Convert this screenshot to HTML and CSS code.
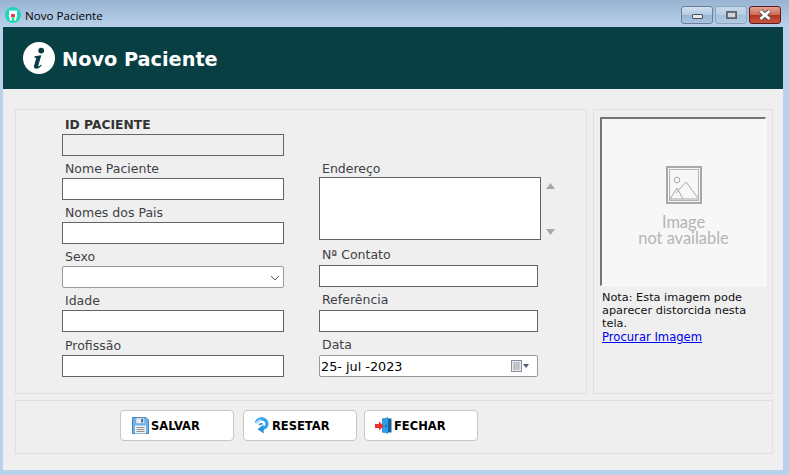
FILE: index.html
```html
<!DOCTYPE html>
<html lang="pt">
<head>
<meta charset="utf-8">
<title>Novo Paciente</title>
<link rel="stylesheet" href="styles.css">
</head>
<body>
<div class="titlebar">
  <svg class="app-icon" width="16" height="16" viewBox="0 0 16 16">
    <circle cx="8" cy="8" r="8" fill="#1fd6bd"/>
    <path d="M4 3.500h8v5l-1 5h-1.600L8.600 9.500H7.400l-.8 4H5l-1-5z" fill="#fff"/>
    <path d="M6 7h4v3H6z" fill="#e0405a"/>
    <path d="M5.500 11.500h1.200l.3-1.500H6zM10.500 11.500H9.300L9 10h1z" fill="#e8c22a"/>
  </svg>
  <span class="title-text">Novo Paciente</span>
  <div class="win-buttons">
    <div class="win-btn"><span class="glyph-min"></span></div>
    <div class="win-btn win-btn-off"><span class="glyph-max"></span></div>
    <div class="win-btn win-btn-close">
      <svg width="14" height="12" viewBox="0 0 14 12"><path d="M2.500 2l9 8M11.500 2l-9 8" stroke="#46505c" stroke-width="4.400"/><path d="M2.500 2l9 8M11.500 2l-9 8" stroke="#fff" stroke-width="2.800"/></svg>
    </div>
  </div>
</div>
<div class="content">
  <header class="banner">
    <svg width="32" height="32" viewBox="0 0 32 32">
      <circle cx="16" cy="16" r="16" fill="#fff"/>
      <circle cx="18.200" cy="8.600" r="2.900" fill="#073f43"/>
      <path d="M11.500 14.200l6.800-1-3 10.200c-.2.900.5 1 1.100.6l1.800-1.400.5.700c-1.600 2-3.400 3.400-5.500 3.400-2 0-2.600-1.300-2.100-3.100l2-6.900c.2-.8-.2-1-1.500-1z" fill="#073f43"/>
    </svg>
    <h1 class="banner-title">Novo Paciente</h1>
  </header>
  <main class="page">
    <div class="top-row">
      <section class="panel form-panel">
        <div class="col col-left">
          <label class="lbl lbl-strong">ID PACIENTE</label>
          <div class="input input-off"></div>
          <label class="lbl">Nome Paciente</label>
          <div class="input"></div>
          <label class="lbl">Nomes dos Pais</label>
          <div class="input"></div>
          <label class="lbl">Sexo</label>
          <div class="input input-select">
            <svg width="10" height="6" viewBox="0 0 10 6"><path d="M1 1l4 4 4-4" fill="none" stroke="#555" stroke-width="1"/></svg>
          </div>
          <label class="lbl">Idade</label>
          <div class="input"></div>
          <label class="lbl lbl-tall">Profissão</label>
          <div class="input"></div>
        </div>
        <div class="col col-right">
          <label class="lbl lbl-short">Endereço</label>
          <div class="area-row">
            <div class="input area"></div>
            <div class="scroller">
              <svg width="9" height="6" viewBox="0 0 9 6"><path d="M4.500 0L9 6H0z" fill="#a9a9a9"/></svg>
              <svg width="9" height="6" viewBox="0 0 9 6"><path d="M4.500 6L9 0H0z" fill="#a9a9a9"/></svg>
            </div>
          </div>
          <label class="lbl lbl-xtall">Nª Contato</label>
          <div class="input input-narrow"></div>
          <label class="lbl lbl-mid">Referência</label>
          <div class="input input-narrow"></div>
          <label class="lbl lbl-mid">Data</label>
          <div class="input input-narrow input-date">
            <span class="date-text">25- jul -2023</span>
            <svg width="18" height="12" viewBox="0 0 18 12">
              <rect x="0.500" y="0.500" width="10" height="11" fill="#e6e9ed" stroke="#8b8f95"/>
              <path d="M2 3h7M2 5h7M2 7h7M2 9h7M3.500 2v8M5.500 2v8M7.500 2v8" stroke="#b4b8bd" stroke-width="1"/>
              <path d="M12 4h6l-3 4z" fill="#46607c"/>
            </svg>
          </div>
        </div>
      </section>
      <aside class="panel photo-panel">
        <div class="photo">
          <svg width="36" height="38" viewBox="0 0 36 38">
            <rect x="1" y="1" width="34" height="36" fill="none" stroke="#a8a8a8" stroke-width="2"/>
            <rect x="3.500" y="3.500" width="29" height="31" fill="none" stroke="#b4b4b4"/>
            <circle cx="11" cy="14" r="2.800" fill="none" stroke="#a8a8a8"/>
            <path d="M4 33l7-11 6 11M10 27l10-11 12 16M4 33h28" fill="none" stroke="#a8a8a8" stroke-width="1"/>
          </svg>
          <p class="photo-text">Image<br>not available</p>
        </div>
        <p class="note">Nota: Esta imagem pode aparecer distorcida nesta tela.</p>
        <a class="browse" href="#">Procurar Imagem</a>
      </aside>
    </div>
    <section class="panel actions">
      <button class="btn">
        <svg width="17" height="17" viewBox="0 0 17 17">
          <path d="M.5.500h13.500l2.500 2.500v13.500H.5z" fill="#6db3ea" stroke="#3f82bd"/>
          <rect x="4" y="1" width="8.500" height="5.500" fill="#e8eef4" stroke="#7f9db8" stroke-width=".5"/>
          <rect x="9" y="2" width="2.200" height="3.500" fill="#3f76a3"/>
          <rect x="3" y="8.500" width="11" height="8" fill="#f2f2f2"/>
          <path d="M4.500 10.500h8M4.500 12.500h8M4.500 14.500h8" stroke="#8f8f8f"/>
        </svg>
        <span>SALVAR</span>
      </button>
      <button class="btn btn-reset">
        <svg width="15" height="17" viewBox="0 0 15 17">
          <path d="M2.200 6C3 2.800 6 1.500 8.500 1.900c3.300.5 4.900 3.300 4.400 5.900-.4 2-1.900 3.300-4 3.700" fill="none" stroke="#35a3ea" stroke-width="3.200"/>
          <path d="M2.400 6.200C3.400 3.800 5.500 3 7 3.100" fill="none" stroke="#a5dcfa" stroke-width="1.800"/>
          <path d="M9.500 7.600L9.800 16.500 3.500 12.300z" fill="#2a8fdc"/>
          <path d="M5 7.800c1-.8 2.300-1.100 3.500-.7" fill="none" stroke="#2a8fdc" stroke-width="1.600"/>
        </svg>
        <span>RESETAR</span>
      </button>
      <button class="btn btn-close">
        <svg width="17" height="17" viewBox="0 0 17 17">
          <path d="M7 1.500h9.500v14H7z" fill="#12609c"/>
          <path d="M7 2.500l6-2.500v17l-6-2.500z" fill="#2f9be4"/>
          <rect x="10.500" y="8" width="1" height="2" fill="#0d4a7a"/>
          <path d="M0 7h4V4.500L9 9l-5 4.500V11H0z" fill="#ee2f2f"/>
        </svg>
        <span>FECHAR</span>
      </button>
    </section>
  </main>
</div>
</body>
</html>
```
FILE: styles.css
```css
* { box-sizing: border-box; }
html, body { margin: 0; padding: 0; }
body {
  width: 789px;
  height: 475px;
  overflow: hidden;
  background: #b9d1ea;
  font-family: "DejaVu Sans", Verdana, sans-serif;
}
.titlebar {
  height: 27px;
  display: flex;
  align-items: center;
  padding: 3px 8px 0 5px;
  background: linear-gradient(to bottom, #98b4d2, #b9d1ea);
}
.app-icon { margin-right: 4px; }
.title-text {
  font-family: "Open Sans", "Noto Sans", sans-serif;
  font-size: 11.600px;
  color: #000;
}
.win-buttons {
  margin-left: auto;
  display: flex;
  gap: 2px;
  align-self: flex-start;
  margin-top: 3px;
}
.win-btn {
  width: 32px;
  height: 18px;
  border: 1px solid #6b7f9b;
  border-radius: 3px;
  background: linear-gradient(to bottom, #d0e0ef 0%, #b3cbe3 48%, #95b4d5 52%, #a9c4e0 100%);
  display: flex;
  align-items: center;
  justify-content: center;
}
.win-btn-off {
  border-color: #8ba4c2;
  background: linear-gradient(to bottom, #c6d8ea 0%, #b7cee5 48%, #a6c1dd 52%, #b3cbe4 100%);
}
.win-btn-close {
  border-color: #5c1a22;
  background: linear-gradient(to bottom, #e3a394 0%, #cf6a55 48%, #b8321e 52%, #c9583f 100%);
}
.glyph-min {
  display: block;
  width: 11px;
  height: 5px;
  margin-top: 3px;
  border: 1px solid #49525f;
  background: #e8e8e8;
  border-radius: 1px;
}
.glyph-max {
  display: block;
  width: 11px;
  height: 8px;
  border: 1px solid #5a6470;
  background: #d4d6d8;
  box-shadow: inset 0 0 0 1px #6c7682, inset 0 0 0 2px #d4d6d8;
}
.content {
  margin: 0 6px 5px 3px;
  height: 443px;
  background: #efefef;
}
.banner {
  height: 62px;
  background: #073f43;
  display: flex;
  align-items: center;
  gap: 7px;
  padding-left: 20px;
}
.banner-title {
  margin: 2px 0 0;
  font-size: 19.300px;
  font-weight: 700;
  color: #fff;
}
.page { padding: 20px 10px 0 12px; }
.top-row { display: flex; gap: 6px; }
.panel { border: 1px solid #e0e0e0; }
.form-panel {
  width: 572px;
  height: 285px;
  padding: 3px 0 0 46px;
  display: flex;
  gap: 35px;
}
.col { display: flex; flex-direction: column; }
.col-left { width: 222px; }
.col-right { padding-top: 43px; width: 240px; }
.lbl {
  display: block;
  height: 22px;
  padding: 5px 0 0 3px;
  font-size: 12.500px;
  line-height: 16px;
  color: #3f3f46;
}
.lbl-strong {
  font-size: 12.300px;
  font-weight: 700;
  padding-top: 4px;
  height: 21px;
  color: #333;
}
.lbl-tall { height: 23px; padding-top: 6px; }
.lbl-short { height: 21px; padding-top: 5px; }
.lbl-xtall { height: 25px; padding-top: 7px; }
.lbl-mid { height: 23px; padding-top: 5px; }
.input {
  height: 22px;
  border: 1px solid #646464;
  background: #fff;
}
.input-off { background: #efefef; }
.input-select {
  border-color: #999;
  border-radius: 2px;
  display: flex;
  align-items: center;
  justify-content: flex-end;
  padding: 2px 3px 0 0;
}
.area-row { display: flex; align-items: stretch; gap: 4px; }
.area { width: 222px; height: 63px; flex: none; }
.scroller {
  width: 10px;
  padding: 6px 0 5px;
  display: flex;
  flex-direction: column;
  justify-content: space-between;
  align-items: center;
}
.input-narrow { width: 219px; }
.input-date {
  border-color: #999;
  border-radius: 2px;
  display: flex;
  align-items: center;
  justify-content: space-between;
  padding: 0 9px 0 1px;
}
.date-text { font-size: 12.800px; color: #000; }
.input-date svg { margin-right: -1px; }
.photo-panel {
  width: 180px;
  height: 285px;
  padding: 7px 6px 0 6px;
  display: flex;
  flex-direction: column;
  align-items: flex-start;
}
.photo {
  width: 166px;
  height: 169px;
  background: #f7f7f7;
  border-style: solid;
  border-width: 2px 1px 1px 2px;
  border-color: #757575 #fff #fff #757575;
  display: flex;
  flex-direction: column;
  align-items: center;
  padding-top: 47px;
}
.photo-text {
  margin: 10px 0 0;
  font-family: "Lato", sans-serif;
  font-size: 16.400px;
  line-height: 16px;
  color: #b4b4b4;
  text-align: center;
}
.note {
  margin: 5px 0 0 2px;
  font-size: 11.300px;
  line-height: 13px;
  color: #111;
}
.browse {
  margin: 1px 0 0 2px;
  font-size: 11.600px;
  line-height: 13px;
  color: #0000ee;
}
.actions {
  margin-top: 6px;
  width: 758px;
  height: 54px;
  padding: 9px 0 0 104px;
  display: flex;
  align-items: flex-start;
}
.btn {
  width: 114px;
  height: 31px;
  background: #fff;
  border: 1px solid #c6c6c6;
  border-radius: 4px;
  padding: 0 0 0 11px;
  display: flex;
  align-items: center;
  gap: 2px;
  font-family: "DejaVu Sans", Verdana, sans-serif;
  font-size: 11.500px;
  font-weight: 700;
  color: #000;
}
.btn-reset { margin-left: 9px; padding-left: 10px; gap: 3px; }
.btn-close { margin-left: 7px; padding-left: 10px; gap: 2px; }
```
